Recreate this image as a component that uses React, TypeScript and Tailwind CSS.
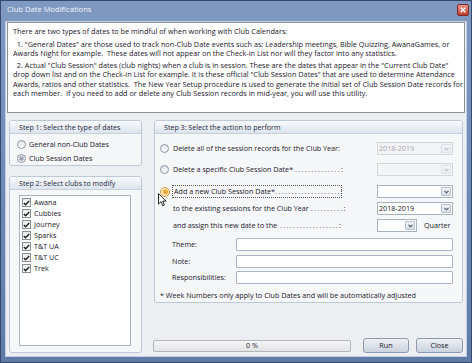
import React from "react";

const Chevron = ({ disabled }: { disabled?: boolean }) => (
  <svg width="5" height="4" viewBox="0 0 5 4">
    <path d="M0.5 0.8 L2.5 2.8 L4.5 0.8" fill="none" stroke={disabled ? "#b8bcc4" : "#4a5160"} strokeWidth="1.1" />
  </svg>
);

function Combo({ cls, value, disabled }: { cls: string; value?: string; disabled?: boolean }) {
  return (
    <div
      className={
        "h-[13px] shrink-0 flex border " +
        (disabled ? "border-[#d3d6db] bg-[#f3f4f6] text-[#a7a9ad] " : "border-[#a9b2bf] bg-white text-[#222] ") +
        cls
      }
    >
      <div className="flex-1 pl-[1px] leading-[11px] whitespace-nowrap overflow-hidden">{value}</div>
      <div
        className={
          "w-[10px] my-[1px] mr-[1px] border rounded-[1px] flex items-center justify-center bg-linear-to-b " +
          (disabled ? "border-[#dfe2e6] from-[#f4f5f7] to-[#e9ecf0]" : "border-[#b6c1cf] from-[#f3f5f8] to-[#d7dee8]")
        }
      >
        <Chevron disabled={disabled} />
      </div>
    </div>
  );
}

function Radio({ state }: { state?: "checked" | "hot" }) {
  if (state === "hot")
    return (
      <div className="w-[10px] h-[10px] rounded-full border border-[#d69a3a] bg-linear-to-b from-[#fff3dc] to-[#fde3b0] flex items-center justify-center shrink-0">
        <div className="w-[5px] h-[5px] rounded-full bg-linear-to-b from-[#f6c24a] to-[#e6901e]" />
      </div>
    );
  return (
    <div className="w-[9px] h-[9px] rounded-full border border-[#8e949e] bg-linear-to-b from-[#e2e5ea] to-[#fdfdfe] flex items-center justify-center shrink-0">
      {state === "checked" && <div className="w-[5px] h-[5px] rounded-full bg-linear-to-b from-[#b6bcc6] to-[#8d95a2] border border-[#a3aab5]" />}
    </div>
  );
}

function Check({ label }: { label: string }) {
  return (
    <div className="h-[11px] flex items-center">
      <div className="w-[9px] h-[9px] border border-[#8e8f8f] bg-linear-to-b from-[#e9eaec] to-[#ffffff] flex items-center justify-center shrink-0">
        <svg width="7" height="6" viewBox="0 0 7 6">
          <path d="M0.8 3 L2.6 4.8 L6.2 1" fill="none" stroke="#1b1b1b" strokeWidth="1.3" />
        </svg>
      </div>
      <span className="ml-[3px] whitespace-nowrap">{label}</span>
    </div>
  );
}

function GroupHeader({ title }: { title: string }) {
  return (
    <div className="h-[13px] shrink-0 flex items-center pl-[9px] border-b border-[#c7d1de] bg-linear-to-b from-[#f8fafc] to-[#dde4ee] rounded-t-[2px] text-[#1c2637] text-[7.1px]">
      {title}
    </div>
  );
}

function Leader({ text, dots }: { text: string; dots: number }) {
  return (
    <>
      <span className="whitespace-pre shrink-0">{text}</span>
      <span className="flex-1 min-w-0" />
      <span className="shrink-0 whitespace-nowrap tracking-[1.4px] text-[#5b3f6e]">{".".repeat(dots)}</span>
      <span className="shrink-0">:</span>
    </>
  );
}

function InputRow({ label, cls }: { label: string; cls: string }) {
  return (
    <div className={"flex items-center h-[13px] " + cls}>
      <span className="w-[81px] pl-[17px] whitespace-nowrap">{label}</span>
      <div className="w-[217px] h-[13px] border border-[#abb5c3] bg-white rounded-[1px]" />
    </div>
  );
}

export default function App() {
  return (
    <div className="relative w-[472px] h-[363px] flex flex-col bg-linear-to-b from-[#7f99c1] to-[#5f7ba8] border border-[#34496d] font-['Open_Sans',sans-serif] text-[7.2px] text-[#23202c]">
      {/* title bar */}
      <div className="h-[20px] shrink-0 flex items-center justify-between pl-[6px] pr-[2px]">
        <span className="text-[7.6px] text-[#f2f5fa] -mt-[3px]">Club Date Modifications</span>
        <div className="w-[12px] h-[12px] -mt-[3px] rounded-[2px] border border-[#7c2a24] bg-linear-to-b from-[#e8968b] to-[#c2382c] flex items-center justify-center">
          <svg width="6" height="6" viewBox="0 0 6 6">
            <path d="M0.7 0.7 L5.3 5.3 M5.3 0.7 L0.7 5.3" stroke="#ffffff" strokeWidth="1.4" />
          </svg>
        </div>
      </div>

      {/* content */}
      <div className="flex-1 mx-[4px] mb-[5px] border border-[#c2cfe0] bg-[#eceef2] flex flex-col px-[1px]">
        {/* info box */}
        <div className="h-[91px] shrink-0 border border-[#8c929b] bg-white pl-[5px] pt-[4px] leading-[9.5px] text-[7.3px] overflow-hidden">
          <p className="whitespace-pre">There are two types of dates to be mindful of when working with Club Calendars:</p>
          <p className="whitespace-pre mt-[3px]">
            {"  1. \"General Dates\" are those used to track non-Club Date events such as: Leadership meetings, Bible Quizzing, AwanaGames, or"}
            <br />
            {"Awards Night for example.  These dates will not appear on the Check-in List nor will they factor into any statistics."}
          </p>
          <p className="whitespace-pre mt-[2px]">
            {"  2. Actual \"Club Session\" dates (club nights) when a club is in session. These are the dates that appear in the \"Current Club Date\""}
            <br />
            {"drop down list and on the Check-in List for example. It is these official \"Club Session Dates\" that are used to determine Attendance"}
            <br />
            {"Awards, ratios and other statistics.  The New Year Setup procedure is used to generate the initial set of Club Session Date records for"}
            <br />
            {"each member.  If you need to add or delete any Club Session records in mid-year, you will use this utility."}
          </p>
        </div>

        {/* lower area */}
        <div className="flex-1 flex mt-[7px] pl-[2px] pr-[1px] pb-[3px]">
          {/* left column */}
          <div className="w-[133px] flex flex-col">
            <div className="h-[46px] border border-[#bfcad8] rounded-[3px] bg-[#f6f7f9] flex flex-col">
              <GroupHeader title="Step 1: Select the type of dates" />
              <div className="flex items-center h-[12px] mt-[4px] pl-[7px]">
                <Radio />
                <span className="ml-[3px]">General non-Club Dates</span>
              </div>
              <div className="flex items-center h-[12px] mt-[2px] pl-[7px]">
                <Radio state="checked" />
                <span className="ml-[3px]">Club Session Dates</span>
              </div>
            </div>
            <div className="flex-1 mt-[10px] border border-[#bfcad8] rounded-[3px] bg-[#f6f7f9] flex flex-col">
              <GroupHeader title="Step 2: Select clubs to modify" />
              <div className="flex-1 mt-[5px] ml-[9px] mr-[10px] mb-[6px] border border-[#aab4c1] bg-white pt-[1px] pl-[2px]">
                {["Awana", "Cubbies", "Journey", "Sparks", "T&T UA", "T&T UC", "Trek"].map((c) => (
                  <Check key={c} label={c} />
                ))}
              </div>
            </div>
          </div>

          {/* right column */}
          <div className="ml-[12px] w-[309px] flex flex-col">
            <div className="h-[183px] border border-[#bfcad8] rounded-[3px] bg-[#f6f7f9] flex flex-col">
              <GroupHeader title="Step 3: Select the action to perform" />

              <div className="flex items-center h-[13px] mt-[8px] pl-[5px]">
                <Radio />
                <div className="ml-[4px] w-[168px] flex whitespace-nowrap">Delete all of the session records for the Club Year:</div>
                <Combo cls="ml-[36px] w-[76px]" value="2018-2019" disabled />
              </div>

              <div className="flex items-center h-[13px] mt-[8px] pl-[5px]">
                <Radio />
                <div className="ml-[4px] w-[168px] flex">
                  <Leader text="Delete a specific Club Session Date* " dots={14} />
                </div>
                <Combo cls="ml-[36px] w-[76px]" disabled />
              </div>

              <div className="flex items-center h-[13px] mt-[9px] pl-[5px]">
                <Radio state="hot" />
                <div className="ml-[2px] w-[170px] h-[13px] flex items-center border border-dotted border-[#5a5a5a] pl-[1px]">
                  <Leader text="Add a new Club Session Date*" dots={20} />
                </div>
                <Combo cls="ml-[35px] w-[76px]" />
              </div>

              <div className="flex items-center h-[13px] mt-[4px] pl-[18px]">
                <div className="w-[168px] flex">
                  <Leader text="to the existing sessions for the Club Year " dots={10} />
                </div>
                <Combo cls="ml-[36px] w-[76px]" value="2018-2019" />
              </div>

              <div className="flex items-center h-[13px] mt-[4px] pl-[18px]">
                <div className="w-[168px] flex">
                  <Leader text="and assign this new date to the " dots={18} />
                </div>
                <Combo cls="ml-[36px] w-[40px]" />
                <span className="ml-[7px]">Quarter</span>
              </div>

              <InputRow label="Theme:" cls="mt-[6px]" />
              <InputRow label="Note:" cls="mt-[4px]" />
              <InputRow label="Responsibilities:" cls="mt-[3px]" />

              <div className="mt-[6px] pl-[5px] whitespace-nowrap">
                * Week Numbers only apply to Club Dates and will be automatically adjusted
              </div>
            </div>

            <div className="mt-auto flex items-center h-[15px]">
              <div className="-ml-[1px] w-[198px] h-[12px] border border-[#b2b5ba] rounded-[2px] bg-linear-to-b from-[#f6f6f6] to-[#e2e3e5] flex items-center justify-center">
                0 %
              </div>
              <button className="ml-[12px] w-[46px] h-[15px] border border-[#8d9aad] rounded-[3px] bg-linear-to-b from-[#eef1f5] to-[#cbd3df] text-[7.2px] text-[#1d2330]">
                Run
              </button>
              <button className="ml-[7px] w-[47px] h-[15px] border border-[#8d9aad] rounded-[3px] bg-linear-to-b from-[#eef1f5] to-[#cbd3df] text-[7.2px] text-[#1d2330]">
                Close
              </button>
            </div>
          </div>
        </div>
      </div>

      {/* mouse cursor */}
      <svg className="absolute left-[157px] top-[192px]" width="9" height="14" viewBox="0 0 9 14">
        <path d="M0.5 0.5 L0.5 11 L3 8.6 L4.8 12.8 L6.4 12.1 L4.7 8.1 L8 8.1 Z" fill="#ffffff" stroke="#111" strokeWidth="0.9" strokeLinejoin="round" />
      </svg>
    </div>
  );
}
